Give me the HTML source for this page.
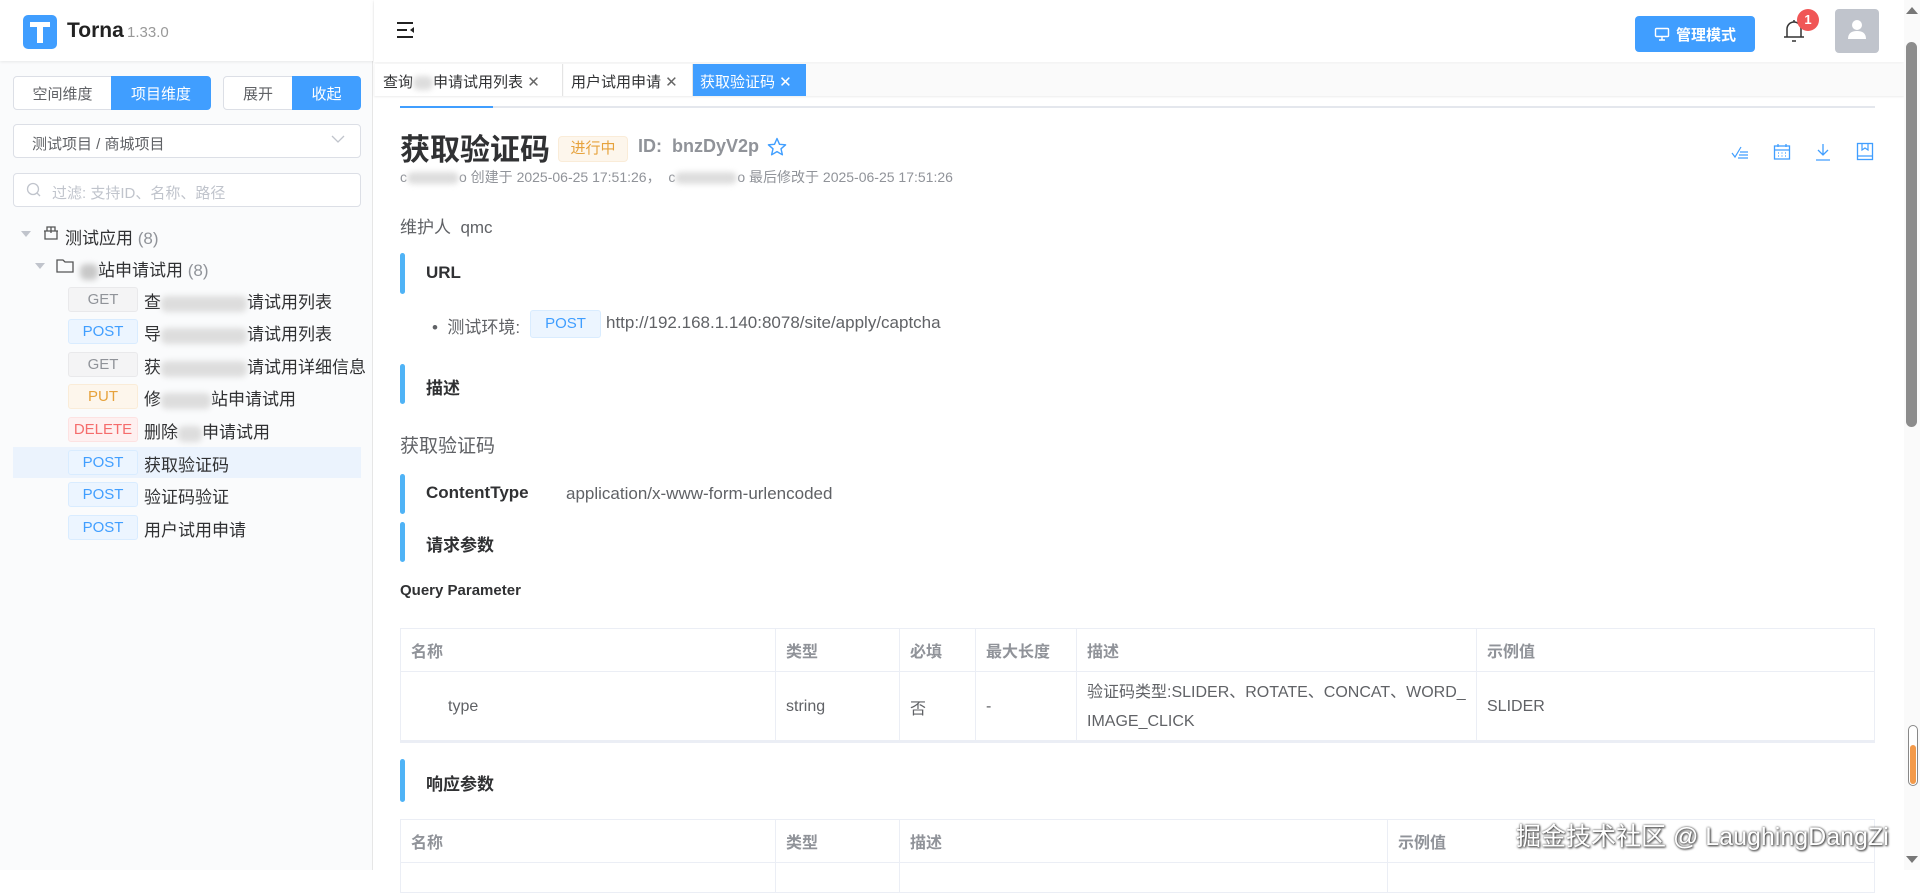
<!DOCTYPE html>
<html><head><meta charset="utf-8">
<style>
*{box-sizing:border-box;margin:0;padding:0}
body{width:1920px;height:870px;overflow:hidden;background:#fff;font-family:"Liberation Sans","Noto Sans CJK SC",sans-serif;color:#303133;position:relative}
.a{position:absolute}
.side{left:0;top:0;width:373px;height:870px;background:#fafbfc;border-right:1px solid #e6e6e6}
.btn{position:absolute;height:34px;border:1px solid #dcdfe6;background:#fff;font-size:15px;color:#606266;display:flex;align-items:center;justify-content:center}
.btn.on{background:#409eff;border-color:#409eff;color:#fff}
.badge{position:absolute;left:68px;width:70px;height:25px;border-radius:3px;font-size:15px;display:flex;align-items:center;justify-content:center;border:1px solid}
.g{background:#f4f4f5;border-color:#e9e9eb;color:#909399}
.p{background:#ecf5ff;border-color:#d9ecff;color:#409eff}
.u{background:#fdf6ec;border-color:#faecd8;color:#e6a23c}
.d{background:#fef0f0;border-color:#fde2e2;color:#f56c6c}
.rt{position:absolute;left:144px;font-size:17px;color:#303133;white-space:nowrap}
.blur{display:inline-block;background:#c8c8c8;filter:blur(3px);border-radius:6px;vertical-align:middle}
.sec{position:absolute;left:400px;width:5px;border-radius:3px;background:#4fb3f6}
.sect{position:absolute;left:426px;font-size:17px;font-weight:bold;color:#303133}
table{border-collapse:collapse;position:absolute;left:400px;width:1475px;font-size:16px;color:#606266;table-layout:fixed}
td{border:1px solid #ebeef5;padding:0 10px;vertical-align:middle;word-break:break-all}
th{border:1px solid #ebeef5;padding:0 10px;text-align:left;font-weight:bold;color:#909399;background:#fff}
</style></head><body>

<div class="a side"></div>
<div class="a" style="left:0;top:0;width:373px;height:61px;background:#fff;box-shadow:0 1px 3px rgba(0,0,0,.08)"></div>
<div class="a" style="left:23px;top:15px;width:34px;height:34px;background:#409eff;border-radius:5px"></div>
<div class="a" style="left:30px;top:22px;width:20px;height:5px;background:#fff"></div>
<div class="a" style="left:37px;top:22px;width:6px;height:21px;background:#fff"></div>
<div class="a" style="left:67px;top:19px;font-size:21px;font-weight:bold;color:#222">Torna</div>
<div class="a" style="left:127px;top:24px;font-size:15px;color:#999">1.33.0</div>

<div class="btn" style="left:13px;top:76px;width:99px;border-radius:4px 0 0 4px">空间维度</div>
<div class="btn on" style="left:111px;top:76px;width:100px;border-radius:0 4px 4px 0">项目维度</div>
<div class="btn" style="left:223px;top:76px;width:70px;border-radius:4px 0 0 4px">展开</div>
<div class="btn on" style="left:292px;top:76px;width:69px;border-radius:0 4px 4px 0">收起</div>

<div class="a" style="left:13px;top:124px;width:348px;height:34px;border:1px solid #dcdfe6;border-radius:4px;background:#fff;font-size:15px;color:#606266;padding:8px 0 0 18px">测试项目 / 商城项目</div>
<svg class="a" style="left:331px;top:134px" width="14" height="10"><path d="M1 2 L7 8 L13 2" fill="none" stroke="#c0c4cc" stroke-width="1.3"/></svg>
<div class="a" style="left:13px;top:173px;width:348px;height:34px;border:1px solid #dcdfe6;border-radius:4px;background:#fff;font-size:15px;color:#c0c4cc;padding:8px 0 0 38px">过滤: 支持ID、名称、路径</div>
<svg class="a" style="left:26px;top:182px" width="16" height="16"><circle cx="7" cy="7" r="5.5" fill="none" stroke="#c0c4cc" stroke-width="1.3"/><path d="M11 11 L14 14" stroke="#c0c4cc" stroke-width="1.3"/></svg>

<svg class="a" style="left:21px;top:231px" width="10" height="8"><path d="M0 0 L10 0 L5 6z" fill="#c0c4cc"/></svg>
<svg class="a" style="left:43px;top:225px" width="16" height="16"><path d="M2 6 L2 14 L14 14 L14 6 M1 6 L15 6 M4 6 L4 2 L12 2 L12 6 M8 2 L8 8" fill="none" stroke="#555" stroke-width="1.3"/></svg>
<div class="a" style="left:65px;top:224px;font-size:17px;color:#303133">测试应用 <span style="color:#909399">(8)</span></div>
<svg class="a" style="left:35px;top:263px" width="10" height="8"><path d="M0 0 L10 0 L5 6z" fill="#c0c4cc"/></svg>
<svg class="a" style="left:56px;top:258px" width="18" height="16"><path d="M1 2 L7 2 L9 4 L17 4 L17 14 L1 14z" fill="none" stroke="#555" stroke-width="1.3"/></svg>
<div class="a" style="left:80px;top:256px;font-size:17px;color:#303133"><span class="blur" style="width:18px;height:16px"></span>站申请试用 <span style="color:#909399">(8)</span></div>

<div class="a" style="left:13px;top:447px;width:348px;height:31px;background:#ebf3fd"></div>
<div class="badge g" style="top:287px">GET</div><div class="rt" style="top:288px">查<span class="blur" style="width:86px;height:16px;background:#ddd"></span>请试用列表</div>
<div class="badge p" style="top:319px">POST</div><div class="rt" style="top:320px">导<span class="blur" style="width:86px;height:16px;background:#ddd"></span>请试用列表</div>
<div class="badge g" style="top:352px">GET</div><div class="rt" style="top:353px">获<span class="blur" style="width:86px;height:16px;background:#ddd"></span>请试用详细信息</div>
<div class="badge u" style="top:384px">PUT</div><div class="rt" style="top:385px">修<span class="blur" style="width:50px;height:16px;background:#ddd"></span>站申请试用</div>
<div class="badge d" style="top:417px">DELETE</div><div class="rt" style="top:418px">删除<span class="blur" style="width:24px;height:16px;background:#ddd"></span>申请试用</div>
<div class="badge p" style="top:450px">POST</div><div class="rt" style="top:451px">获取验证码</div>
<div class="badge p" style="top:482px">POST</div><div class="rt" style="top:483px">验证码验证</div>
<div class="badge p" style="top:515px">POST</div><div class="rt" style="top:516px">用户试用申请</div>

<div class="a" style="left:374px;top:0;width:1530px;height:62px;background:#fff;box-shadow:0 1px 4px rgba(0,0,0,.08)"></div>
<svg class="a" style="left:396px;top:21px" width="20" height="18"><path d="M1 2 H17 M1 9 H11 M1 16 H17" stroke="#222" stroke-width="2"/><path d="M18 6 L14 9 L18 12z" fill="#222"/></svg>
<div class="a" style="left:1635px;top:16px;width:120px;height:36px;background:#409eff;border-radius:4px;color:#fff;font-size:15px;font-weight:bold;display:flex;align-items:center;justify-content:center"><svg width="16" height="14" style="margin-right:6px"><rect x="1.5" y="1.5" width="13" height="8" rx="1" fill="none" stroke="#fff" stroke-width="1.4"/><path d="M5 13 H11 M8 10 V13" stroke="#fff" stroke-width="1.4"/></svg>管理模式</div>
<svg class="a" style="left:1782px;top:18px" width="24" height="26"><path d="M5 19 V11 A7 7 0 0 1 19 11 V19 M2 19 H22 M10 23 H14 M12 2 V4" fill="none" stroke="#333" stroke-width="1.5"/></svg>
<div class="a" style="left:1797px;top:9px;width:22px;height:22px;border-radius:11px;background:#f05656;color:#fff;font-size:13px;font-weight:bold;text-align:center;line-height:22px">1</div>
<div class="a" style="left:1835px;top:9px;width:44px;height:44px;border-radius:4px;background:#c0c4cc"></div>
<svg class="a" style="left:1845px;top:17px" width="24" height="24"><circle cx="12" cy="8" r="5" fill="#fff"/><path d="M3 22 Q3 14 12 14 Q21 14 21 22z" fill="#fff"/></svg>

<div class="a" style="left:374px;top:64px;width:1530px;height:32px;background:#fafafa;box-shadow:0 1px 2px rgba(0,0,0,.08)"></div>
<div class="a" style="left:375px;top:64px;width:188px;height:32px;background:#fff;border-right:1px solid #e4e4e4;font-size:15px;color:#303133;padding:7px 0 0 8px;white-space:nowrap">查询<span class="blur" style="width:20px;height:14px;background:#ddd"></span>申请试用列表 <span style="color:#666">✕</span></div>
<div class="a" style="left:564px;top:64px;width:129px;height:32px;background:#fff;border-right:1px solid #e4e4e4;font-size:15px;color:#303133;padding:7px 0 0 7px;white-space:nowrap">用户试用申请 <span style="color:#666">✕</span></div>
<div class="a" style="left:693px;top:64px;width:113px;height:32px;background:#409eff;font-size:15px;color:#fff;padding:7px 0 0 7px;white-space:nowrap">获取验证码 <span>✕</span></div>

<div class="a" style="left:400px;top:106px;width:1475px;height:2px;background:#e4e7ed"></div>
<div class="a" style="left:400px;top:106px;width:93px;height:2px;background:#409eff"></div>

<div class="a" style="left:400px;top:125px;font-size:30px;font-weight:bold;color:#303133">获取验证码</div>
<div class="a" style="left:558px;top:136px;width:70px;height:26px;background:#fdf6ec;border:1px solid #faecd8;border-radius:4px;color:#e6a23c;font-size:15px;text-align:center;line-height:24px">进行中</div>
<div class="a" style="left:638px;top:136px;font-size:18px;font-weight:bold;color:#909399">ID:&nbsp; bnzDyV2p</div>
<svg class="a" style="left:767px;top:137px" width="20" height="20"><path d="M10 1.5 L12.5 7.3 L18.6 7.8 L14 11.8 L15.4 17.8 L10 14.6 L4.6 17.8 L6 11.8 L1.4 7.8 L7.5 7.3z" fill="none" stroke="#409eff" stroke-width="1.4" stroke-linejoin="round"/></svg>
<div class="a" style="left:400px;top:167px;font-size:14px;color:#909399;white-space:nowrap">c<span class="blur" style="width:52px;height:12px;background:#ddd"></span>o 创建于 2025-06-25 17:51:26，&nbsp; c<span class="blur" style="width:62px;height:12px;background:#ddd"></span>o 最后修改于 2025-06-25 17:51:26</div>

<svg class="a" style="left:1731px;top:144px" width="18" height="16"><path d="M1 9 L4 13 L10 3 M9 8 H17 M8 11 H17 M7 14 H17" fill="none" stroke="#409eff" stroke-width="1.2"/></svg>
<svg class="a" style="left:1773px;top:143px" width="18" height="18"><rect x="1.5" y="3" width="15" height="13" fill="none" stroke="#409eff" stroke-width="1.3"/><path d="M1.5 7 H16.5 M5 1 V4 M13 1 V4" stroke="#409eff" stroke-width="1.3"/><path d="M5 10h1M8.5 10h1M12 10h1M5 13h1M8.5 13h1M12 13h1" stroke="#409eff" stroke-width="1.3"/></svg>
<svg class="a" style="left:1814px;top:143px" width="18" height="18"><path d="M9 1 V12 M4 7 L9 12 L14 7 M2 17 H16" fill="none" stroke="#409eff" stroke-width="1.3"/></svg>
<svg class="a" style="left:1856px;top:142px" width="18" height="19"><rect x="1.5" y="1.5" width="15" height="16" fill="none" stroke="#409eff" stroke-width="1.3"/><path d="M6 1.5 V8 L9 6 L12 8 V1.5 M1.5 14 H16.5" fill="none" stroke="#409eff" stroke-width="1.2"/></svg>

<div class="a" style="left:400px;top:213px;font-size:17px;color:#606266">维护人&nbsp; qmc</div>
<div class="sec" style="top:253px;height:41px"></div><div class="sect" style="top:263px">URL</div>
<div class="a" style="left:432px;top:313px;font-size:17px;color:#606266;white-space:nowrap">•&nbsp; 测试环境:</div>
<div class="a" style="left:530px;top:310px;width:71px;height:28px;background:#ecf5ff;border:1px solid #d9ecff;border-radius:3px;color:#409eff;font-size:15px;text-align:center;line-height:26px">POST</div>
<div class="a" style="left:606px;top:313px;font-size:17px;color:#606266">http://192.168.1.140:8078/site/apply/captcha</div>
<div class="sec" style="top:364px;height:40px"></div><div class="sect" style="top:374px">描述</div>
<div class="a" style="left:400px;top:431px;font-size:19px;color:#606266">获取验证码</div>
<div class="sec" style="top:474px;height:40px"></div><div class="sect" style="top:483px">ContentType</div>
<div class="a" style="left:566px;top:484px;font-size:17px;color:#606266">application/x-www-form-urlencoded</div>
<div class="sec" style="top:522px;height:40px"></div><div class="sect" style="top:531px">请求参数</div>
<div class="a" style="left:400px;top:582px;font-size:15px;font-weight:bold;color:#303133">Query Parameter</div>

<table style="top:628px">
<tr style="height:43px"><th style="width:375px">名称</th><th style="width:124px">类型</th><th style="width:76px">必填</th><th style="width:101px">最大长度</th><th style="width:400px">描述</th><th>示例值</th></tr>
<tr style="height:71px"><td style="padding-left:47px">type</td><td>string</td><td>否</td><td>-</td><td style="line-height:29px">验证码类型:SLIDER、ROTATE、CONCAT、WORD_IMAGE_CLICK</td><td>SLIDER</td></tr>
</table>
<div class="a" style="left:400px;top:740px;width:1475px;height:3px;background:#ebeef5"></div>

<div class="sec" style="top:759px;height:43px"></div><div class="sect" style="top:770px">响应参数</div>
<table style="top:819px">
<tr style="height:43px"><th style="width:375px">名称</th><th style="width:124px">类型</th><th style="width:488px">描述</th><th>示例值</th></tr>
<tr style="height:30px"><td></td><td></td><td></td><td></td></tr>
</table>

<div class="a" style="left:1516px;top:817px;font-size:25px;color:#fff;white-space:nowrap;text-shadow:0 0 2px #444,1px 1px 2px #333">掘金技术社区 @ LaughingDangZi</div>

<div class="a" style="left:1904px;top:0;width:16px;height:870px;background:#fafafa"></div>
<svg class="a" style="left:1906px;top:7px" width="12" height="8"><path d="M0 7 L6 0 L12 7z" fill="#777"/></svg>
<div class="a" style="left:1906px;top:42px;width:11px;height:385px;background:#8c8c8c;border-radius:6px"></div>
<svg class="a" style="left:1906px;top:856px" width="12" height="8"><path d="M0 0 L6 7 L12 0z" fill="#777"/></svg>
<div class="a" style="left:1908px;top:725px;width:10px;height:61px;border:1px solid #888;border-radius:5px;background:#fff"></div>
<div class="a" style="left:1910px;top:745px;width:6px;height:39px;border-radius:3px;background:#f39a4a"></div>
</body></html>
